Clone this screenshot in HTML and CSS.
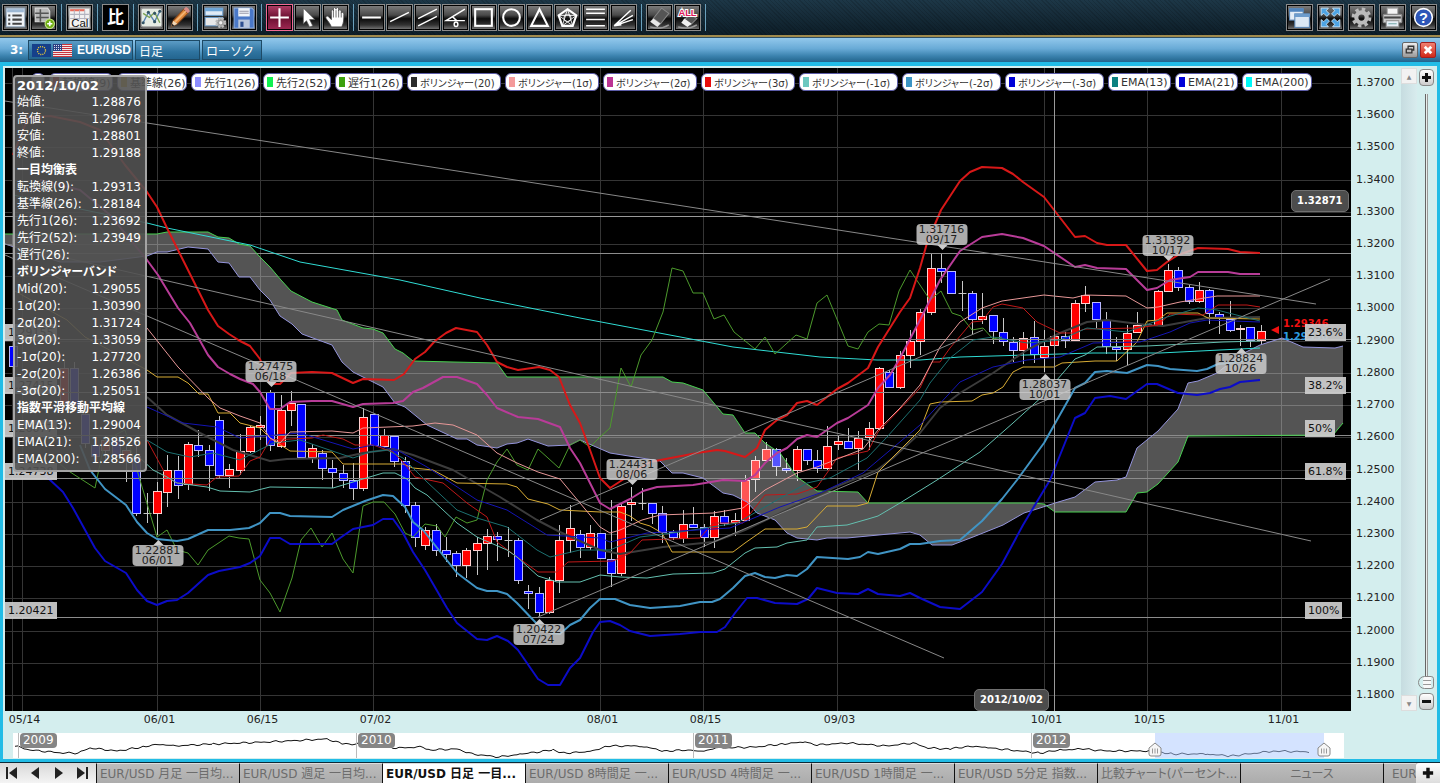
FILE: index.html
```html
<!DOCTYPE html>
<html lang="ja">
<head>
<meta charset="utf-8">
<title>EUR/USD 日足</title>
<link rel="stylesheet" href="styles.css">
</head>
<body>
<header class="toolbar">
  <div class="group">
    <button class="tool" aria-label="一覧"><svg viewBox="0 0 24 24"><rect x="3" y="3" width="18" height="18" fill="#eef3f8" stroke="#8fa6bd"/><rect x="4" y="4" width="16" height="3" fill="#9db8d4"/><path d="M9 10h9M9 14h9M9 18h9" stroke="#444" stroke-width="2"/><path d="M5 10h2M5 14h2M5 18h2" stroke="#444" stroke-width="2"/></svg></button>
    <button class="tool" aria-label="追加"><svg viewBox="0 0 24 24"><path d="M4 3h12l2 3v10H4z" fill="#bbb" stroke="#ddd"/><path d="M4 8h13M9 4v12M5 12h12" stroke="#555" stroke-width="1.500"/><circle cx="18" cy="18" r="4.500" fill="#6fae12" stroke="#c5e58a"/><path d="M18 15.500v5M15.500 18h5" stroke="#fff" stroke-width="1.600"/></svg></button>
  </div>
  <div class="group">
    <button class="tool" aria-label="カレンダー"><svg viewBox="0 0 24 24"><rect x="2" y="3" width="20" height="19" fill="#f2f2f2" stroke="#aaa"/><path d="M3 5h14" stroke="#e86a5a" stroke-width="2"/><path d="M3 9h18M3 13h18M7 5v9M12 5v9M17 5v9" stroke="#b4b4c0" stroke-width="1"/><text x="4" y="21" class="cal-text">Cal</text></svg></button>
  </div>
  <div class="group">
    <button class="tool tool-black">比</button>
  </div>
  <div class="group">
    <button class="tool" aria-label="指標"><svg viewBox="0 0 24 24"><rect x="2" y="3" width="20" height="18" rx="2" fill="#e6ece4" stroke="#999"/><path d="M4 17l5-10 6 9 5-10" fill="none" stroke="#5580b0" stroke-width="1.300"/><path d="M4 8l6 4 5-5 5 10" fill="none" stroke="#78a050" stroke-width="1.300"/><g fill="#356"><circle cx="9" cy="7" r="1.500"/><circle cx="15" cy="16" r="1.500"/><circle cx="4" cy="17" r="1.500"/><circle cx="20" cy="6" r="1.500"/><circle cx="15" cy="8" r="1.500"/></g></svg></button>
    <button class="tool" aria-label="描画"><svg viewBox="0 0 24 24"><path d="M4 21l2-6L16 4l4 4L10 18z" fill="#e08a3c" stroke="#8a4a1c"/><path d="M16 4l2-2q2 0 4 4l-2 2z" fill="#d98c86"/><path d="M4 21l2-6 4 3z" fill="#f0d8b8"/><path d="M4 21l1-3 2 2z" fill="#222"/><path d="M8 16L18 6" stroke="#f5b878" stroke-width="1.500"/></svg></button>
  </div>
  <div class="group">
    <button class="tool" aria-label="設定"><svg viewBox="0 0 24 24"><rect x="2" y="3" width="17" height="7" fill="#dfeaf5" stroke="#6d9cc8"/><rect x="2" y="3" width="17" height="3" fill="#6ea6d8"/><rect x="2" y="12" width="17" height="8" fill="#e8e8e8" stroke="#6d9cc8"/><circle cx="17" cy="17" r="4" fill="#999" stroke="#bbb" stroke-width="2.500" stroke-dasharray="2 1.200"/><circle cx="17" cy="17" r="1.600" fill="#eee"/></svg></button>
    <button class="tool" aria-label="保存"><svg viewBox="0 0 24 24"><path d="M3 3h17l2 2v17H3z" fill="#4a78c8" stroke="#88aadd"/><rect x="7" y="3" width="11" height="8" fill="#f0f4fa"/><path d="M8 6h9M8 8h9" stroke="#99a"/><rect x="7" y="14" width="11" height="8" fill="#b9c6dc"/><rect x="9" y="16" width="3" height="5" fill="#2d4f90"/></svg></button>
  </div>
  <div class="group">
    <button class="tool tool-on" aria-label="十字"><svg viewBox="0 0 24 24"><path d="M12 3v18M3 12h18" stroke="#fff" stroke-width="2"/></svg></button>
    <button class="tool" aria-label="選択"><svg viewBox="0 0 24 24"><path d="M8 3v15l3-3 3 6 3-1-3-6h5z" fill="#fff" stroke="#555" stroke-width=".6"/></svg></button>
    <button class="tool" aria-label="移動"><svg viewBox="0 0 24 24"><path d="M8 21c-1-3-3-5-5-8-1-2 1-3 2-2l3 3V6c0-2 2-2 2 0V4c0-2 2-2 2.500 0 0-2 2.500-2 2.500 0v2c0-2 2-2 2.500 0v2c0-2 2.500-1 2.500 1 0 5 0 8-2 12z" fill="#fff" stroke="#444" stroke-width=".8"/><path d="M10 6v6M12.500 5v7M15 6v6M17.500 8v4" stroke="#555" stroke-width=".8"/></svg></button>
  </div>
  <div class="group">
    <button class="tool" aria-label="水平線"><svg viewBox="0 0 24 24"><path d="M3 12h18" class="ink2"/></svg></button>
    <button class="tool" aria-label="直線"><svg viewBox="0 0 24 24"><path d="M3 16L21 7" class="ink"/></svg></button>
    <button class="tool" aria-label="平行線"><svg viewBox="0 0 24 24"><path d="M3 13L21 4M3 20l18-9" class="ink"/></svg></button>
    <button class="tool" aria-label="角度線"><svg viewBox="0 0 24 24"><path d="M21 4L3 15h18M9 11l4 4" class="ink"/><ellipse cx="12.500" cy="18.500" rx="1.800" ry="2.200" class="ink"/></svg></button>
    <button class="tool" aria-label="四角"><svg viewBox="0 0 24 24"><rect x="4" y="4" width="16" height="16" class="ink2"/></svg></button>
    <button class="tool" aria-label="円"><svg viewBox="0 0 24 24"><circle cx="12" cy="12" r="8" class="ink2"/></svg></button>
    <button class="tool" aria-label="三角"><svg viewBox="0 0 24 24"><path d="M12 4l8 16H4z" class="ink2"/></svg></button>
    <button class="tool" aria-label="五角形"><svg viewBox="0 0 24 24"><path d="M12 4l8.500 6-3.500 10H7L3.500 10z" class="ink2"/><path d="M12 4l5 16-13.500-10h17L7 20z" class="ink1"/><circle cx="12" cy="12.500" r="3.500" class="ink1"/></svg></button>
    <button class="tool" aria-label="リトレースメント"><svg viewBox="0 0 24 24"><path d="M3 4h18M3 8h18M3 14h18M3 20h18" class="ink"/></svg></button>
    <button class="tool" aria-label="ファン"><svg viewBox="0 0 24 24"><path d="M3 20L19 5M3 20l18-10M3 20l18-6M3 20l7-1" class="ink"/></svg></button>
  </div>
  <div class="group">
    <button class="tool" aria-label="消去"><svg viewBox="0 0 24 24"><path d="M14 3l7 5-8 10-7-5z" fill="#555" stroke="#888"/><path d="M6 13l7 5-3 3-7-5z" fill="#e8e8e8"/><path d="M3 21q10 3 18-2" stroke="#999" fill="none" stroke-width="1.500"/></svg></button>
    <button class="tool" aria-label="全消去"><svg viewBox="0 0 24 24"><path d="M15 9l6 4-6 6-6-5z" fill="#555" stroke="#888"/><path d="M9 13l7 5-4 3-6-4z" fill="#f0f0f0"/><path d="M3 21q10 3 18-2" stroke="#999" fill="none" stroke-width="1.500"/><text x="12" y="11" class="all-text">ALL</text></svg></button>
  </div>
  <div class="group group-right">
    <button class="tool" aria-label="ウィンドウ"><svg viewBox="0 0 24 24"><rect x="2.500" y="3.500" width="13" height="11" fill="#e4edf6" stroke="#5b87b5"/><path d="M2 5h14" stroke="#4f84bd" stroke-width="3"/><rect x="7.500" y="8.500" width="14" height="13" fill="#dce8f4" stroke="#5b87b5"/><path d="M7 10h15" stroke="#6d9ccc" stroke-width="3"/></svg></button>
    <button class="tool" aria-label="全画面"><svg viewBox="0 0 24 24"><g fill="#4ea4e4" stroke="#d4eafa" stroke-width=".8"><path d="M3 3h7L8 5.500l3 3-2.500 2.500-3-3L3 10z"/><path d="M21 3h-7l2 2.500-3 3 2.500 2.500 3-3L21 10z"/><path d="M3 21h7l-2-2.500 3-3L8.500 13l-3 3L3 14z"/><path d="M21 21h-7l2-2.500-3-3 2.500-2.500 3 3L21 14z"/></g></svg></button>
    <button class="tool" aria-label="環境設定"><svg viewBox="0 0 24 24"><circle cx="12" cy="12" r="8" fill="none" stroke="#bbb" stroke-width="3" stroke-dasharray="3.300 2.980"/><circle cx="12" cy="12" r="5" fill="none" stroke="#bbb" stroke-width="4"/></svg></button>
    <button class="tool" aria-label="印刷"><svg viewBox="0 0 24 24"><path d="M7 3h10v7H7z" fill="#f4f4f4" stroke="#aaa"/><rect x="3" y="9" width="18" height="8" rx="1" fill="#ccc" stroke="#888"/><path d="M4 12h16" stroke="#444" stroke-width="2"/><path d="M6 15h12v6H6z" fill="#e6eef6" stroke="#999"/><path d="M8 18h8" stroke="#7aa"/></svg></button>
    <button class="tool" aria-label="ヘルプ"><svg viewBox="0 0 24 24"><circle cx="12" cy="12" r="8.500" fill="#2d56b8" stroke="#fff" stroke-width="1.500"/><text x="12" y="17" class="help-text">?</text></svg></button>
  </div>
</header>

<div class="titlebar">
  <span class="win-no">3:</span>
  <button class="seg seg-pair">
    <svg class="flag" viewBox="0 0 19 13"><rect width="19" height="13" fill="#16408a"/><circle cx="9.500" cy="6.500" r="4" fill="none" stroke="#e8c83a" stroke-width="1.300" stroke-dasharray="1.100 1"/></svg>
    <svg class="flag" viewBox="0 0 19 13"><rect width="19" height="13" fill="#f4e8e8"/><path d="M0 .5h19M0 2.500h19M0 4.500h19M0 6.500h19M0 8.500h19M0 10.500h19M0 12.500h19" stroke="#c8343c"/><rect width="9" height="7" fill="#2b3f82"/><path d="M1 1.500h7M1 3.500h7M1 5.500h7" stroke="#dde" stroke-dasharray="1 1"/></svg>
    <span>EUR/USD</span>
  </button>
  <button class="seg seg-term">日足</button>
  <button class="seg seg-type">ローソク</button>
  <span class="spacer"></span>
  <button class="win win-restore" aria-label="元に戻す"><svg viewBox="0 0 15 15"><path d="M5.500 6V3.500h6v4H9M3.500 6.500h6v4h-6z" fill="none" stroke="#333" stroke-width="1.400"/></svg></button>
  <button class="win win-close" aria-label="閉じる"><svg viewBox="0 0 15 15"><path d="M4 4l7 7M11 4l-7 7" stroke="#fff" stroke-width="3"/></svg></button>
</div>

<main class="frame">
  <section class="plot" id="plot">
    <svg class="canvas" id="canvas" viewBox="5 68 1346 643" preserveAspectRatio="none"></svg>
    <div class="legend">
      <span class="pill w-blank"></span>
      <span class="pill w-ten"><i class="sw c-ten"></i>転換線(9)</span>
      <span class="pill w-kij"><i class="sw c-kij"></i>基準線(26)</span>
      <span class="pill w-sen"><i class="sw c-s1"></i>先行1(26)</span>
      <span class="pill w-sen"><i class="sw c-s2"></i>先行2(52)</span>
      <span class="pill w-sen"><i class="sw c-chi"></i>遅行1(26)</span>
      <span class="pill w-bol"><i class="sw c-mid"></i>ボリンジャー(20)</span>
      <span class="pill w-bol"><i class="sw c-p1"></i>ボリンジャー(1σ)</span>
      <span class="pill w-bol"><i class="sw c-p2"></i>ボリンジャー(2σ)</span>
      <span class="pill w-bol"><i class="sw c-p3"></i>ボリンジャー(3σ)</span>
      <span class="pill w-bom"><i class="sw c-m1"></i>ボリンジャー(-1σ)</span>
      <span class="pill w-bom"><i class="sw c-m2"></i>ボリンジャー(-2σ)</span>
      <span class="pill w-bom"><i class="sw c-m3"></i>ボリンジャー(-3σ)</span>
      <span class="pill w-ema"><i class="sw c-e13"></i>EMA(13)</span>
      <span class="pill w-ema"><i class="sw c-e21"></i>EMA(21)</span>
      <span class="pill w-kij"><i class="sw c-e200"></i>EMA(200)</span>
    </div>
    <div class="overlay" id="overlay"></div>
    <div class="readout">
      <h2>2012/10/02</h2>
      <dl>
        <div><dt>始値:</dt><dd>1.28876</dd></div>
        <div><dt>高値:</dt><dd>1.29678</dd></div>
        <div><dt>安値:</dt><dd>1.28801</dd></div>
        <div><dt>終値:</dt><dd>1.29188</dd></div>
      </dl>
      <h3>一目均衡表</h3>
      <dl>
        <div><dt>転換線(9):</dt><dd>1.29313</dd></div>
        <div><dt>基準線(26):</dt><dd>1.28184</dd></div>
        <div><dt>先行1(26):</dt><dd>1.23692</dd></div>
        <div><dt>先行2(52):</dt><dd>1.23949</dd></div>
        <div><dt>遅行(26):</dt><dd></dd></div>
      </dl>
      <h3>ボリンジャーバンド</h3>
      <dl>
        <div><dt>Mid(20):</dt><dd>1.29055</dd></div>
        <div><dt>1σ(20):</dt><dd>1.30390</dd></div>
        <div><dt>2σ(20):</dt><dd>1.31724</dd></div>
        <div><dt>3σ(20):</dt><dd>1.33059</dd></div>
        <div><dt>-1σ(20):</dt><dd>1.27720</dd></div>
        <div><dt>-2σ(20):</dt><dd>1.26386</dd></div>
        <div><dt>-3σ(20):</dt><dd>1.25051</dd></div>
      </dl>
      <h3>指数平滑移動平均線</h3>
      <dl>
        <div><dt>EMA(13):</dt><dd>1.29004</dd></div>
        <div><dt>EMA(21):</dt><dd>1.28526</dd></div>
        <div><dt>EMA(200):</dt><dd>1.28566</dd></div>
      </dl>
    </div>
  </section>
  <div class="price-axis" id="priceAxis"></div>
  <div class="scroll">
    <button class="scroll-btn" aria-label="上へ">▲</button>
    <button class="scroll-btn" aria-label="下へ">▼</button>
  </div>
  <div class="zoomer">
    <button class="zoom-btn" aria-label="拡大"><svg viewBox="0 0 13 15"><path d="M6.500 3v9M2 7.500h9" stroke="#111" stroke-width="3"/></svg></button>
    <input class="zoom-range" type="range" min="0" max="100" value="100" aria-label="縦の倍率">
    <button class="zoom-btn" aria-label="縮小"><svg viewBox="0 0 13 15"><path d="M2 7.500h9" stroke="#111" stroke-width="3"/></svg></button>
  </div>
  <div class="time-axis" id="timeAxis"></div>
  <div class="overview" id="overview">
    <svg class="canvas" id="overviewCanvas" viewBox="13 733 1331 25" preserveAspectRatio="none"></svg>
  </div>
</main>

<nav class="tabs">
  <div class="pager">
    <button aria-label="最初"><svg viewBox="0 0 14 12"><path d="M2 0v12" stroke="#222" stroke-width="2"/><path d="M12 0v12L4 6z" fill="#222"/></svg></button>
    <button aria-label="前"><svg viewBox="0 0 14 12"><path d="M11 0v12L3 6z" fill="#222"/></svg></button>
    <button aria-label="次"><svg viewBox="0 0 14 12"><path d="M3 0v12l8-6z" fill="#222"/></svg></button>
    <button aria-label="最後"><svg viewBox="0 0 14 12"><path d="M12 0v12" stroke="#222" stroke-width="2"/><path d="M2 0v12l8-6z" fill="#222"/></svg></button>
  </div>
  <div class="tab-list">
    <button class="tab">EUR/USD 月足 一目均...</button>
    <button class="tab">EUR/USD 週足 一目均...</button>
    <button class="tab tab-on">EUR/USD 日足 一目...</button>
    <button class="tab">EUR/USD 8時間足 一...</button>
    <button class="tab">EUR/USD 4時間足 一...</button>
    <button class="tab">EUR/USD 1時間足 一...</button>
    <button class="tab">EUR/USD 5分足 指数...</button>
    <button class="tab">比較チャート(パーセント...</button>
    <button class="tab tab-center">ニュース</button>
    <button class="tab tab-last">EUR</button>
  </div>
  <button class="tab-add" aria-label="タブを追加"><svg viewBox="0 0 14 14"><path d="M7 1v12M1 7h12" stroke="#111" stroke-width="4"/></svg></button>
</nav>
<script src="script.js"></script>
</body>
</html>
```
FILE: styles.css
```css
* { box-sizing: border-box; }
html, body { height: 100%; }
body {
  margin: 0;
  display: flex;
  flex-direction: column;
  overflow: hidden;
  background: #0d202c;
  font-family: "DejaVu Sans", "Noto Sans CJK JP", sans-serif;
  font-size: 11px;
}
button { font: inherit; padding: 0; margin: 0; border: 0; cursor: pointer; }

/* toolbar */
.toolbar {
  flex: none;
  display: flex;
  align-items: center;
  height: 38px;
  padding: 0 3px 2px 2px;
  background: repeating-linear-gradient(45deg, #0002 0 1px, transparent 1px 3px), linear-gradient(#1d3747, #0c1c26);
  border-bottom: 1px solid #2f5064;
  box-shadow: inset 0 -2px 0 #a08a4c;
}
.group { display: flex; gap: 1px; padding-right: 4px; margin-right: 4px; border-right: 1px solid #6aa0bc; }
.group-right { gap: 4px; margin: 0 0 0 auto; padding: 0; border: 0; }
.tool {
  width: 27px;
  height: 27px;
  border: 1px solid #8b8b8b;
  outline: 1px solid #000;
  outline-offset: -2px;
  background: linear-gradient(#808080 0, #4a4a4a 40%, #0c0c0c 55%, #333 80%, #808080);
}
.tool svg { display: block; width: 25px; height: 25px; }
.tool-black { background: #000; color: #fff; font-size: 17px; font-weight: bold; line-height: 23px; }
.tool-on { border-color: #f06a94; background: linear-gradient(#b04068, #6a0f30 50%, #a02a54); }
.ink, .ink1, .ink2 { fill: none; stroke: #fff; stroke-width: 1.400; }
.ink1 { stroke-width: .8; }
.ink2 { stroke-width: 2; }
.cal-text { font: 11px "Liberation Sans", sans-serif; fill: #111; }
.all-text { font: bold 9px "Liberation Sans", sans-serif; fill: #e0185a; stroke: #fff; stroke-width: 2px; paint-order: stroke; text-anchor: middle; }
.help-text { font: bold 14px "Liberation Sans", sans-serif; fill: #fff; text-anchor: middle; }

/* window title */
.titlebar {
  flex: none;
  display: flex;
  align-items: center;
  gap: 2px;
  height: 24px;
  padding: 0 4px 0 10px;
  background: linear-gradient(#92c8ec, #68aad6 45%, #3b82ae 75%, #22648c);
  color: #fff;
}
.win-no { width: 16px; font-weight: bold; font-size: 12px; }
.seg {
  display: flex;
  align-items: center;
  height: 20px;
  border: 1px solid #1d4a66;
  background: linear-gradient(#5c9cc6, #2f74a0 60%, #23658f);
  color: #fff;
  font-size: 12px;
  padding-left: 3px;
}
.seg-pair { width: 105px; gap: 2px; font: bold 12px "Liberation Sans", sans-serif; }
.seg-pair span { padding-left: 3px; }
.seg-term { width: 65px; }
.seg-type { width: 60px; }
.flag { width: 19px; height: 13px; }
.spacer { flex: 1; }
.win { width: 16px; height: 16px; border: 1px solid #666; border-radius: 2px; background: linear-gradient(#eee, #999); }
.win svg { display: block; }
.win-close { border-color: #a02020; background: linear-gradient(#f08070, #d02818); }

/* chart window */
.frame {
  flex: 1;
  min-height: 0;
  display: grid;
  grid-template: minmax(0, 1fr) 22px 25px / minmax(0, 1fr) 50px 16px 20px;
  padding: 2px 0 1px 2px;
  border: solid #22bce6;
  border-width: 4px 3px 3px;
  background: #d4eeee;
}
.plot { position: relative; background: #000; overflow: hidden; }
.canvas { display: block; width: 100%; height: 100%; position: absolute; left: 0; top: 0; }
.canvas polyline, .canvas line { fill: none; vector-effect: non-scaling-stroke; }
.grid { stroke: #353535; }
.level { stroke: #8c8c8c; }
.cross { stroke: #9a9a9a; }
.trend { stroke: #888; }
.cloud { fill: rgb(255 255 255 / 33%); }
.wick { stroke: #c8c8c8; }
.up { fill: #f00; stroke: #ffd0d0; }
.down { fill: #00f; stroke: #b8b8ff; }
.thin { stroke-width: 1; }
.thick { stroke-width: 2; stroke-linejoin: round; }

.legend { position: absolute; left: 26px; top: 5px; display: flex; gap: 4px; }
.pill {
  display: flex;
  align-items: center;
  gap: 3px;
  height: 18px;
  padding-left: 3px;
  border: 1px solid #5c5ca8;
  border-radius: 6px;
  background: #fff;
  color: #333;
  white-space: nowrap;
  overflow: hidden;
  font-feature-settings: "palt";
}
.sw { flex: none; width: 6px; height: 10px; }
.w-blank { width: 14px; }
.w-ten { width: 64px; }
.w-kij { width: 70px; }
.w-sen { width: 68px; }
.w-bol { width: 94px; }
.w-bom { width: 99px; }
.w-bol, .w-bom { font-size: 10px; }
.w-ema { width: 63px; }
.c-ten { background: #e02020; }
.c-kij { background: #e8c040; }
.c-s1 { background: #8c8cff; }
.c-s2 { background: #10f050; }
.c-chi { background: #3ca00c; }
.c-mid { background: #2c2c2c; }
.c-p1 { background: #f49a9a; }
.c-p2 { background: #bc3494; }
.c-p3 { background: #e80c0c; }
.c-m1 { background: #6cc8c0; }
.c-m2 { background: #3c94c4; }
.c-m3 { background: #0000d8; }
.c-e13 { background: #0c8080; }
.c-e21 { background: #0000d8; }
.c-e200 { background: #00f8f8; }

.overlay { position: absolute; inset: 0; }
.overlay > * { position: absolute; white-space: nowrap; }
.tag {
  width: 51px;
  height: 21px;
  padding-top: 1px;
  transform: translateX(-50%);
  border-radius: 4px;
  background: rgb(205 205 205 / 84%);
  color: #222;
  text-align: center;
  line-height: 10px;
}
.tag::after { content: ""; position: absolute; left: 21px; border: 5px solid transparent; }
.tag-above::after { top: 21px; border-top-color: #ccc; border-bottom: 0; }
.tag-below::after { bottom: 21px; border-bottom-color: #ccc; border-top: 0; }
.level-tag { height: 17px; padding: 0 3px; line-height: 17px; background: rgb(205 205 205 / 92%); color: #111; }
.cross-tag {
  padding: 0 5px;
  height: 22px;
  line-height: 20px;
  border: 1px solid #707070;
  border-radius: 5px;
  background: #4c4c4c;
  color: #fff;
  font-size: 10px;
  font-weight: bold;
}
.last { font-size: 10px; font-weight: bold; line-height: 13px; }
.last-bid { color: #f01010; }
.last-ask { color: #2c9ce0; }
.last-arrow { border: 4px solid transparent; border-right: 8px solid #f01010; border-left: 0; }

.readout {
  position: absolute;
  left: 8px;
  top: 7px;
  width: 134px;
  padding: 0 4px 2px 2px;
  border: 2px solid #a4a4a4;
  border-radius: 4px;
  background: rgb(82 82 82 / 90%);
  color: #fff;
  font-size: 12px;
  line-height: 17px;
}
.readout h2, .readout h3, .readout dl, .readout dd { margin: 0; font-size: 12px; height: auto; }
.readout h2 { font-size: 13px; height: 17px; }
.readout h3 { height: 17px; font-feature-settings: "palt"; white-space: nowrap; }
.readout dl div { display: flex; justify-content: space-between; height: 17px; white-space: nowrap; }

.price-axis, .time-axis { position: relative; color: #222; }
.price-axis span { position: absolute; left: 5px; transform: translateY(-50%); line-height: 12px; }
.time-axis span { position: absolute; top: 2px; transform: translateX(-50%); line-height: 14px; }

.scroll { display: flex; flex-direction: column; justify-content: space-between; background: linear-gradient(90deg, #c6dce0, #d8ecee); }
.scroll-btn { height: 16px; background: #f2f2f2; border: 1px solid #ddd; color: #888; font-size: 6px; }
.zoomer { display: flex; flex-direction: column; align-items: center; padding: 1px 4px 1px 2px; gap: 4px; }
.zoom-btn { width: 15px; height: 17px; border: 1px solid #888; border-radius: 4px; background: linear-gradient(#fff, #ccc); }
.zoom-btn svg { display: block; }
.zoom-range {
  flex: 1;
  min-height: 0;
  width: 16px;
  margin: 4px 0 0;
  appearance: none;
  writing-mode: vertical-lr;
  background: linear-gradient(90deg, transparent 7px, #666 7px 8px, #e8eeea 8px 9px, #999 9px 10px, transparent 10px);
}
.zoom-range::-webkit-slider-thumb {
  appearance: none;
  width: 16px;
  height: 13px;
  border-radius: 7px 3px 3px 7px;
  border: 1px solid #888;
  background: repeating-linear-gradient(#f8f8f8 0 3px, #999 3px 4px);
  background-clip: content-box;
  padding: 0 2px 0 4px;
  background-color: #f4f4f4;
}

.time-axis { grid-column: 1; grid-row: 2; }
.overview { grid-column: 1; grid-row: 3; position: relative; margin: 0 7px 0 8px; background: #fff; }
.overview-line { stroke: #111; }
.overview-tick { stroke: #bbb; }
.overview-range { fill: rgb(170 200 255 / 50%); }
.year { position: absolute; top: 0; padding: 0 3px; height: 15px; line-height: 15px; border-radius: 4px; background: #858585; color: #fff; font-size: 12px; }
.handle { position: absolute; top: 9px; width: 14px; height: 15px; transform: translateX(-50%); }

/* sheet tabs */
.tabs { flex: none; display: flex; height: 21px; border-top: 1px solid #0c2a38; background: #b4b4b4; overflow: hidden; }
.pager { flex: none; display: flex; width: 96px; padding: 0 5px 0 5px; justify-content: space-between; background: linear-gradient(#d8d8d8, #f4f4f4); }
.pager button { width: 16px; background: none; }
.pager svg { display: block; width: 14px; height: 12px; }
.tab-list { flex: 1; display: flex; min-width: 0; overflow: hidden; }
.tab {
  flex: none;
  width: 143px;
  padding: 0 3px;
  border-left: 1px solid #111;
  border-top: 1px solid #ddd;
  background: linear-gradient(#bcbcbc, #acacac);
  color: #6c6c6c;
  font-size: 12px;
  line-height: 18px;
  text-align: left;
  white-space: nowrap;
  overflow: hidden;
  font-feature-settings: "palt";
}
.tab-on { background: #fff; color: #111; font-weight: bold; }
.tab-center { text-align: center; }
.tab-last { padding-left: 8px; }
.tab-add { flex: none; width: 24px; background: linear-gradient(#fff, #ddd); border-radius: 3px 0 0 0; }
.tab-add svg { display: block; width: 12px; height: 12px; margin: 0 auto; }
```
FILE: script.js
```js
const NS = 'http://www.w3.org/2000/svg';
const VIEW = { x: 5, y: 68, w: 1346, h: 643 };
const canvas = document.getElementById('canvas');
const overlay = document.getElementById('overlay');

function shape(parent, name, attrs) {
  const el = document.createElementNS(NS, name);
  for (const key in attrs) el.setAttribute(key, attrs[key]);
  parent.appendChild(el);
  return el;
}
function label(parent, className, text, pos) {
  const el = document.createElement('span');
  el.className = className;
  el.textContent = text;
  if (pos.x !== undefined) el.style.left = ((pos.x - VIEW.x) / VIEW.w) * 100 + '%';
  if (pos.y !== undefined) el.style.top = ((pos.y - VIEW.y) / VIEW.h) * 100 + '%';
  parent.appendChild(el);
  return el;
}
const hline = (y, c) => shape(canvas, 'line', { x1: 5, x2: 1351, y1: y, y2: y, class: c });
const vline = (x, c) => shape(canvas, 'line', { x1: x, x2: x, y1: 68, y2: 711, class: c });

/* grid and axes */
const priceAxis = document.getElementById('priceAxis');
for (let i = 0; i < 20; i++) {
  const y = 83 + i * 32.21;
  hline(Math.round(y) + 0.5, 'grid');
  label(priceAxis, '', (1.37 - i * 0.01).toFixed(4), { y: y });
}
vline(12.5, 'grid');
const timeAxis = document.getElementById('timeAxis');
[[22.5, '05/14'], [157.5, '06/01'], [260.5, '06/15'], [373.5, '07/02'], [600.5, '08/01'], [703.5, '08/15'],
 [837.5, '09/03'], [1044.5, '10/01'], [1147.5, '10/15'], [1281.5, '11/01']].forEach(([x, t]) => {
  vline(x, 'grid');
  label(timeAxis, '', t, { x: x + 2 });
});

/* candles: bar, colour, body top, body bottom, high, low */
const candles = `-14d346,366,340,370 -9u368,403,360,408 -8d368,405,362,410 -7d414,443,408,448 -6d445,456,440,462 -5u440,450,435,460 -4d440,455,436,462 -3u450,460,445,482 -2d456,513,445,516 -1x513,513,493,523
0u491,513,482,535 1u470,492,455,507 2d470,485,456,499 3u444,484,442,490 4d445,450,430,457 5d450,465,445,491 6d420,475,416,478 7u469,475,464,488 8u451,470,434,475 9u427,451,426,453
10u425,427,416,440 11d392,445,390,451 12u410,446,395,448 13u403,410,391,426 14d404,457,404,457 15u448,457,444,463 16d453,468,450,480 17d468,472,460,488 18d473,480,465,488 19d480,488,463,500
20u417,488,408,491 21d414,445,414,445 22u435,446,429,448 23d436,461,436,467 24d461,505,457,513 25d505,537,502,547 26u530,545,527,550 27d530,550,524,556 28d550,554,537,562 29d553,565,551,577
30u550,565,548,578 31u543,550,537,575 32u536,543,529,570 33d536,539,532,561 34x540,540,527,557 35d540,580,538,584 36d591,593,585,609 37d593,612,587,616 38u580,612,577,614 39u540,580,525,593
40u528,540,505,553 41d534,547,530,558 42u533,547,525,550 43d533,558,533,558 44d559,573,500,587 45u506,573,504,576 46u502,504,487,521 47x503,503,488,510 48d503,513,503,524 49d513,532,506,543
50d532,537,530,540 51u524,538,510,543 52d524,527,507,527 53d527,537,524,547 54u516,537,511,548 55d516,523,510,526 56u520,522,513,536 57u480,520,475,520 58u460,479,456,492 59u449,460,442,462
60d449,466,448,476 61d468,470,458,473 62u449,470,446,481 63d449,460,449,465 64d460,468,450,473 65u446,468,426,470 66u441,444,435,450 67d441,448,428,448 68u438,448,431,470 69u428,437,422,450
70u368,428,367,430 71d372,387,370,387 72u355,387,351,389 73u341,355,330,368 74u312,341,309,355 75u268,312,254,315 76d268,271,254,283 77d271,293,271,293 78x293,293,281,311 79d293,319,291,335
80u316,319,293,324 81d315,331,315,344 82d332,341,318,346 83d342,350,337,362 84u338,350,332,364 85d337,354,321,363 86u346,357,330,372 87u336,345,336,345 88d336,340,332,348 89u303,340,300,340
90u295,303,286,312 91d302,319,302,328 92d320,346,312,354 93d347,349,337,361 94u333,349,325,365 95u325,332,312,332 96d324,325,324,325 97u291,325,290,325 98u270,291,264,292 99d270,287,267,291
100d287,301,285,304 101u290,301,282,303 102d290,313,289,324 103d314,317,312,334 104d319,330,301,332 105u328,329,325,346 106d327,340,327,347 107u331,340,325,344`;
candles.split(/\s+/).forEach((entry) => {
  const [, k, kind, rest] = entry.match(/^(-?\d+)([udx])(.*)$/);
  const [top, bottom, high, low] = rest.split(',').map(Number);
  const x = Math.round(157 + 10.315 * k) + 0.5;
  shape(canvas, 'line', { x1: x, x2: x, y1: high, y2: low, class: 'wick' });
  if (kind === 'x') shape(canvas, 'line', { x1: x - 4, x2: x + 4, y1: top + 0.5, y2: top + 0.5, class: 'wick' });
  else shape(canvas, 'rect', { x: x - 4, y: top + 0.5, width: 8, height: Math.max(1, bottom - top), class: kind === 'u' ? 'up' : 'down' });
});

/* ichimoku cloud */
const span2 = '5,234 147,234 157,234 167,232 208,232 218,237 229,238 239,244 250,246 260,257 270,267 281,280 291,291 312,302 337,310 342,320 363,328 373,329 383,333 395,349 403,353 413,361 453,362 497,363 507,377 600,377 663,377 672,382 683,383 703,390 723,414 733,415 745,433 755,433 765,443 780,453 797,477 817,491 858,492 868,503 1033,503 1044,504 1055,512 1126,512 1137,493 1147,492 1158,484 1178,462 1188,436 1333,435 1343,423';
const span1 = '5,244 60,262 100,262 147,256 157,252 167,252 188,247 208,249 218,262 229,263 239,277 250,277 260,290 270,300 280,316 292,324 302,334 332,345 342,362 353,372 383,387 395,403 405,407 427,425 457,439 467,439 477,445 497,448 507,444 517,443 528,439 548,446 570,445 580,440 610,453 660,461 672,473 683,473 703,478 723,493 733,495 747,502 757,513 775,520 787,533 797,538 817,540 827,538 847,538 910,532 920,535 932,545 952,545 973,537 1003,525 1024,513 1040,508 1055,503 1075,497 1095,482 1117,480 1126,477 1137,448 1158,431 1178,409 1188,383 1198,381 1217,373 1240,355 1260,345 1282,338 1303,347 1335,348 1343,346';
shape(canvas, 'polygon', { points: span2 + ' ' + span1.split(' ').reverse().join(' '), class: 'cloud' });

[253.5, 339.5, 392.5, 435.5, 478.5, 617.5].forEach((y) => hline(y, 'level'));

const lines = [
  ['#48d050', 'thin', span2],
  ['#9494dc', 'thin', span1],
  ['#30dcd4', 'thin', '13,195 147,223 167,228 250,245 300,262 400,280 480,298 540,310 580,318 633,328 733,347 820,357 877,360 920,360 960,357 1093,353 1160,353 1260,348'],
  ['#4c9a2c', 'thin', '50,455 67,470 95,488 105,440 125,430 137,470 157,537 167,530 177,550 188,553 198,565 208,550 229,536 239,538 249,539 260,580 270,593 280,612 292,578 301,540 311,528 322,547 332,533 343,559 353,573 363,506 373,502 384,502 395,514 405,533 413,537 425,524 437,526 445,537 456,517 467,523 477,520 487,480 497,462 507,449 517,465 528,470 538,449 548,458 559,468 570,445 580,440 590,447 600,437 610,428 621,368 631,387 641,355 652,340 663,312 672,268 683,271 693,293 703,293 714,319 724,315 734,332 755,349 765,337 775,354 796,335 807,339 817,303 827,295 848,346 858,349 868,332 879,324 889,325 899,291 910,270 930,300 941,291 952,313 961,316 972,330 983,328 993,339 1002,337'],
  ['#3c3c3c', 'thick', '147,397 167,415 200,433 233,450 270,461 287,459 340,458 363,453 393,449 413,455 453,470 500,497 537,520 560,532 600,550 620,554 663,547 713,542 745,530 793,507 833,488 877,470 893,458 920,433 940,408 960,393 993,373 1027,350 1060,333 1087,322 1107,320 1147,325 1163,326 1207,318 1260,317'],
  ['#d8ac34', 'thin', '13,290 67,320 85,337 147,370 157,377 178,377 188,383 199,394 208,394 218,413 230,413 240,423 260,428 270,438 290,451 332,452 343,464 403,464 413,468 433,470 457,483 507,484 517,487 528,499 548,504 560,510 600,512 620,512 630,516 640,523 650,526 662,533 672,552 733,552 745,543 765,529 797,529 807,527 827,506 857,506 868,503 878,472 890,460 920,430 930,404 940,402 972,401 982,395 993,393 1003,387 1013,372 1023,367 1054,367 1062,363 1095,361 1117,361 1137,342 1147,321 1158,320 1167,313 1198,313 1208,318 1260,319'],
  ['#c01818', 'thin', '147,440 167,477 177,483 207,485 217,477 239,476 250,461 260,457 270,440 312,438 323,435 343,439 355,445 373,445 393,452 403,462 415,477 443,483 467,503 487,517 497,542 517,557 538,572 557,572 568,562 613,561 630,553 642,540 700,538 713,523 743,523 765,495 797,494 817,487 827,473 837,458 868,451 878,432 920,388 932,362 940,362 950,348 972,322 982,321 993,307 1002,304 1023,308 1037,322 1060,333 1073,333 1085,329 1137,328 1158,325 1170,314 1203,315 1218,305 1247,305 1260,307'],
  ['#1c7070', 'thin', '147,440 167,452 190,457 213,453 240,460 273,443 300,440 353,458 370,452 387,450 403,458 427,482 457,510 477,518 507,527 537,550 550,557 580,550 610,550 640,537 680,532 737,523 777,500 807,483 830,478 867,458 887,437 920,400 930,383 950,358 973,340 993,337 1027,343 1060,340 1087,328 1127,332 1167,317 1198,308 1217,310 1260,321'],
  ['#1414b4', 'thin', '147,407 183,423 217,427 240,438 300,433 353,449 373,445 397,450 427,467 477,500 507,510 547,535 600,538 610,542 647,533 730,528 780,507 820,493 863,473 920,425 960,382 993,367 1027,360 1060,357 1093,343 1140,342 1170,332 1190,323 1207,320 1260,322'],
  ['#64c0b0', 'thin', '140,458 153,470 167,477 177,483 207,487 220,491 250,492 270,487 333,488 353,482 383,473 395,473 407,479 415,488 427,495 457,523 477,537 507,550 517,557 528,567 538,576 557,582 580,582 600,575 620,577 647,578 673,574 713,573 725,569 745,553 755,548 777,547 787,543 807,540 817,527 847,525 868,519 878,516 900,503 937,480 980,452 1013,423 1044,395 1075,359 1085,355 1097,347 1147,346 1223,342 1260,341'],
  ['#e89898', 'thin', '147,328 178,367 208,398 220,408 240,416 260,423 270,438 280,443 290,432 332,431 353,433 363,428 413,426 435,423 453,425 477,435 497,453 517,463 538,472 560,479 580,503 600,527 610,533 620,530 642,520 660,515 713,513 743,508 753,500 765,490 797,473 817,467 863,449 878,430 900,408 920,385 940,347 960,322 982,308 1002,301 1044,295 1073,298 1085,295 1126,296 1147,308 1158,307 1180,302 1217,296 1260,296'],
  ['#b83c98', 'thick', '40,180 80,190 110,215 147,260 158,275 178,308 190,323 208,355 218,367 230,374 240,379 253,384 260,392 270,409 280,409 290,402 312,401 332,401 353,407 363,404 393,403 403,401 413,392 423,388 443,377 457,377 477,384 487,395 497,408 518,417 538,419 560,427 570,448 580,463 600,503 610,509 630,499 643,491 657,487 693,485 723,480 745,481 755,475 765,463 777,453 787,448 797,439 807,435 817,437 837,423 848,418 868,405 878,388 890,375 900,358 920,320 940,280 960,251 982,237 1002,234 1023,238 1044,246 1075,267 1085,265 1097,268 1126,269 1147,290 1157,288 1170,280 1190,277 1198,272 1228,272 1240,274 1260,274'],
  ['#4094c4', 'thick', '80,445 90,470 105,489 126,505 137,522 147,533 157,539 177,541 188,539 208,530 230,530 249,528 260,523 270,513 280,513 290,516 332,517 343,510 365,501 383,495 393,496 405,507 413,522 423,530 457,573 477,588 487,591 497,591 507,594 517,603 538,625 550,633 560,634 570,625 580,620 590,608 600,599 615,599 630,605 650,608 680,606 700,602 712,602 720,599 733,588 745,576 755,573 765,577 775,578 787,575 797,576 807,569 817,557 848,559 860,557 868,552 878,554 900,549 910,544 920,544 940,541 960,540 982,521 1002,499 1017,480 1044,443 1075,388 1085,383 1095,372 1107,371 1127,373 1147,365 1158,366 1170,369 1197,371 1207,369 1218,364 1233,363 1260,357'],
  ['#0c0cc8', 'thick', '40,468 48,478 63,492 73,508 95,548 105,561 126,573 137,590 147,601 157,605 167,601 177,600 188,593 208,575 219,571 240,567 250,563 260,556 270,538 280,538 290,544 332,544 340,538 353,529 373,525 383,519 393,519 403,533 413,552 425,570 447,608 457,623 477,639 487,640 497,636 508,641 518,650 538,679 548,685 560,685 570,668 580,658 593,632 600,622 610,621 620,625 630,631 650,636 680,634 700,632 717,632 725,627 735,613 747,598 757,598 775,603 797,604 808,599 817,588 837,593 858,594 868,589 878,594 900,596 910,593 920,598 940,607 960,609 982,592 1002,564 1023,525 1050,480 1075,418 1085,413 1095,398 1110,396 1126,399 1147,384 1157,384 1178,393 1197,395 1210,393 1220,389 1230,387 1240,382 1260,380'],
  ['#d81818', 'thick', '13,155 28,118 50,116 80,122 100,130 125,165 147,192 157,207 167,228 178,250 188,270 198,290 208,310 218,326 229,334 240,341 250,346 260,359 270,384 280,384 291,373 312,372 332,373 353,383 363,379 394,380 404,374 415,359 425,352 435,341 446,333 456,328 477,332 487,345 497,362 507,367 518,370 539,367 550,370 559,377 570,405 580,423 590,450 600,478 610,488 630,475 650,462 697,453 717,450 725,451 745,457 757,448 765,430 777,420 787,415 797,403 807,401 817,405 837,389 848,383 868,368 878,347 900,312 910,298 920,268 927,243 941,210 960,181 970,172 982,167 1002,168 1013,174 1023,182 1044,197 1075,237 1085,236 1097,243 1107,245 1126,245 1147,271 1157,270 1167,262 1178,255 1198,248 1228,249 1240,252 1260,253'],
];
lines.forEach(([stroke, width, points]) => shape(canvas, 'polyline', { points, stroke, class: width }));

[[5, 101, 1316, 304], [5, 244, 1311, 541], [5, 255, 944, 658], [540, 520, 983, 330], [538, 617, 1330, 279]].forEach(([x1, y1, x2, y2]) =>
  shape(canvas, 'line', { x1, y1, x2, y2, class: 'trend' }));
hline(216.5, 'cross');
vline(1054.5, 'cross');

/* high / low tags */
[[157.5, 545, 'below', '1.22881', '06/01'], [270.5, 361, 'above', '1.27475', '06/18'], [538.5, 624, 'below', '1.20422', '07/24'],
 [631.5, 459, 'above', '1.24431', '08/06'], [941.5, 224, 'above', '1.31716', '09/17'], [1044.5, 379, 'below', '1.28037', '10/01'],
 [1167.5, 235, 'above', '1.31392', '10/17'], [1240.5, 353, 'below', '1.28824', '10/26']].forEach(([x, y, side, price, date]) => {
  const el = label(overlay, 'tag tag-' + side, price, { x, y });
  el.appendChild(document.createElement('br'));
  el.append(date);
});
label(overlay, 'last last-bid', '1.29346', { x: 1283, y: 317 });
label(overlay, 'last last-ask', '1.29330', { x: 1283, y: 330 });
label(overlay, 'last-arrow', '', { x: 1271, y: 326 });
[['1.29155', '23.6%', 324], ['1.27415', '38.2%', 377], ['1.26077', '50%', 420], ['1.24738', '61.8%', 463], ['1.20421', '100%', 602]].forEach(([price, pct, y]) => {
  label(overlay, 'level-tag', price, { x: 5, y });
  label(overlay, 'level-tag', pct, { x: 1305, y });
});
label(overlay, 'cross-tag', '1.32871', { x: 1291, y: 190 });
label(overlay, 'cross-tag', '2012/10/02', { x: 974, y: 689 });

/* overview strip */
const ov = document.getElementById('overview');
const ovc = document.getElementById('overviewCanvas');
const ovLeft = (x) => ((x - 13) / 1331) * 100 + '%';
const keys = '15,746 30,750 63,753 78,753 90,748 117,751 143,747 157,744 173,746 213,744 267,742 327,739 343,744 369,744 396,748 423,747 430,750 457,749 472,754 499,757 522,754 553,750 564,753 587,752 610,746 641,746 664,751 691,750 698,752 717,748 756,747 782,744 805,742 817,745 847,743 886,746 913,743 928,748 950,749 970,746 990,748 1040,753 1060,750 1083,749 1107,751 1153,751 1173,754 1207,754 1230,756 1257,753 1273,751 1312,752'
  .split(' ').map((p) => p.split(',').map(Number));
const trace = [];
for (let i = 0; i < keys.length - 1; i++) {
  const [x0, y0] = keys[i], [x1, y1] = keys[i + 1];
  for (let x = x0; x < x1; x += 3) {
    const wobble = Math.sin(x * 1.7) * 0.5 + Math.sin(x * 0.61) * 0.5;
    trace.push(x + ',' + (y0 + ((y1 - y0) * (x - x0)) / (x1 - x0) + wobble).toFixed(1));
  }
}
shape(ovc, 'polyline', { points: trace.join(' '), class: 'overview-line' });
[[18.5, '2009'], [356.5, '2010'], [693.5, '2011'], [1031.5, '2012']].forEach(([x, year]) => {
  shape(ovc, 'line', { x1: x, x2: x, y1: 733, y2: 758, class: 'overview-tick' });
  const el = document.createElement('span');
  el.className = 'year';
  el.textContent = year;
  el.style.left = ovLeft(x + 1.5);
  ov.appendChild(el);
});
shape(ovc, 'rect', { x: 1155, y: 733, width: 169, height: 25, class: 'overview-range' });
[1155, 1324].forEach((x) => {
  const svg = shape(ov, 'svg', { viewBox: '0 0 14 15', class: 'handle' });
  svg.style.left = ovLeft(x);
  shape(svg, 'path', { d: 'M1 6L7 1l6 5v6q0 2-2 2H3q-2 0-2-2z', fill: '#f6f6f6', stroke: '#888' });
  shape(svg, 'path', { d: 'M4.500 6.500v5M7 6.500v5M9.500 6.500v5', stroke: '#999' });
});
```
